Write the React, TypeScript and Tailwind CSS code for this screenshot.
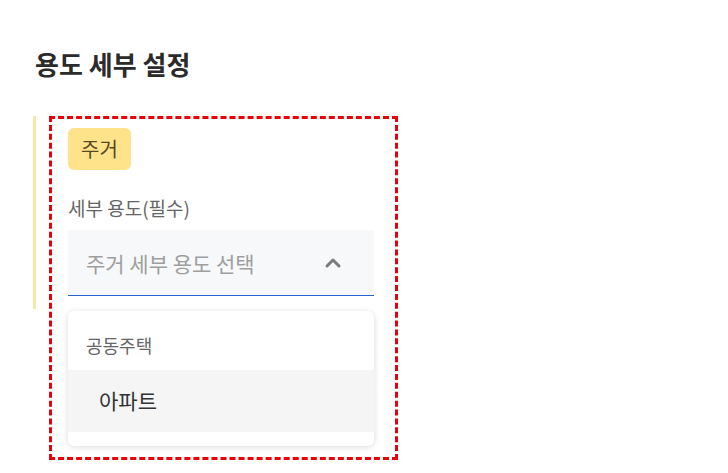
import { ChevronUp } from 'lucide-react';

const FONT = '"Noto Sans CJK KR", "Noto Sans", sans-serif';

function SubUseSelect() {
  return (
    <div className="flex flex-col">
      {/* ─── Field ─── */}
      <div className="flex h-[66px] items-center justify-between border-b border-[#2c62d0] bg-[#f7f8fa] pl-[18px] pr-[29px]">
        <span className="text-[21px] leading-[28px] text-[#9e9e9e]">주거 세부 용도 선택</span>
        <ChevronUp size={24} strokeWidth={3} className="text-[#7a7a7a]" />
      </div>

      {/* ─── Open menu ─── */}
      <div className="mt-[15px] overflow-hidden rounded-[6px] bg-white shadow-[0_1px_6px_rgba(0,0,0,0.14)]">
        <div className="h-[59px] pl-[18px] pt-[21px] text-[18px] leading-[26px] text-[#666666]">공동주택</div>
        <div className="flex h-[62px] items-center bg-[#f5f5f5] pl-[31px] text-[21px] text-[#333333]">아파트</div>
        <div className="h-[14px]" />
      </div>
    </div>
  );
}

export default function App() {
  return (
    <div className="min-h-screen bg-white pt-[46px]" style={{ fontFamily: FONT }}>
      <h2 className="ml-[35px] text-[26px] font-bold leading-[36px] text-[#2b2b2b]">용도 세부 설정</h2>

      <div className="ml-[33px] mt-[34px] flex items-start">
        <div className="h-[193px] w-[3px] bg-[#fbe6a4]" />

        <div className="ml-[13px] w-[349px] border-[3px] border-dashed border-[#e8000b] pb-[11px] pl-[16px] pr-[21px] pt-[9px]">
          <span className="inline-flex h-[42px] items-center rounded-[6px] bg-[#ffe38a] px-[13px] text-[20px] text-[#5a4820]">
            주거
          </span>
          <p className="mt-[26px] text-[19px] leading-[24px] text-[#666666]">세부 용도(필수)</p>
          <div className="mt-[10px]">
            <SubUseSelect />
          </div>
        </div>
      </div>
    </div>
  );
}
